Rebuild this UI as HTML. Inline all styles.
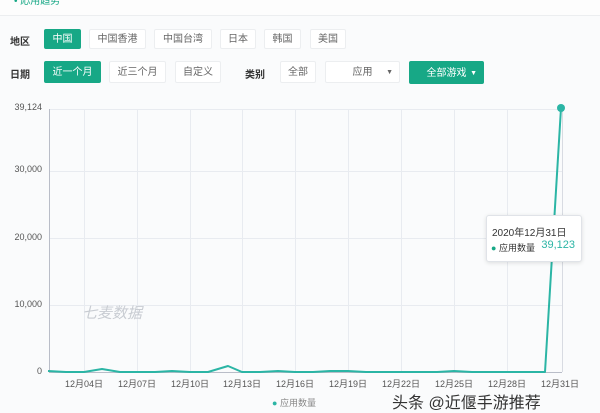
<!DOCTYPE html><html><head><meta charset="utf-8"><style>
body{margin:0;width:600px;height:400px;background:#fafbfc;font-family:"Liberation Sans","Noto Sans CJK SC",sans-serif;position:relative;overflow:hidden;color:#333}
.b{position:absolute;height:20px;line-height:20px;font-size:10px;text-align:center;border:1px solid #eceef0;background:#fff;color:#666;border-radius:2px;box-sizing:border-box}
.g{background:#17a886;color:#fff;border-color:#17a886}
.l{position:absolute;font-size:10px;font-weight:bold;color:#333}
.yl{position:absolute;font-size:9px;color:#555;right:558px;text-align:right}
.xl{position:absolute;top:377px;font-size:9px;color:#555;width:60px;text-align:center;margin-left:-30px}
</style></head><body>
<div style="position:absolute;left:0;top:0;width:600px;height:15px;background:#fdfdfd;border-bottom:1px solid #eceef0"></div>
<div style="position:absolute;left:14px;top:-8px;font-size:10px;color:#17a886">• 応用趋势</div>
<div class="l" style="left:10px;top:33px">地区</div>
<div class="b g" style="left:44px;top:29px;width:37px">中国</div>
<div class="b" style="left:89px;top:29px;width:57px">中国香港</div>
<div class="b" style="left:154px;top:29px;width:58px">中国台湾</div>
<div class="b" style="left:220px;top:29px;width:36px">日本</div>
<div class="b" style="left:264px;top:29px;width:37px">韩国</div>
<div class="b" style="left:310px;top:29px;width:36px">美国</div>
<div class="l" style="left:10px;top:66px">日期</div>
<div class="b g" style="left:44px;top:61px;width:57px;height:22px;line-height:22px">近一个月</div>
<div class="b" style="left:109px;top:61px;width:57px;height:22px;line-height:22px">近三个月</div>
<div class="b" style="left:175px;top:61px;width:46px;height:22px;line-height:22px">自定义</div>
<div class="l" style="left:245px;top:66px">类别</div>
<div class="b" style="left:280px;top:61px;width:36px;height:22px;line-height:22px">全部</div>
<div class="b" style="left:325px;top:61px;width:75px;height:22px;line-height:22px">应用<span style="position:absolute;right:6px;font-size:7px">▼</span></div>
<div class="b g" style="left:409px;top:61px;width:75px;height:23px;line-height:23px">全部游戏<span style="position:absolute;right:6px;font-size:7px">▼</span></div>
<div class="yl" style="top:102px">39,124</div>
<div class="yl" style="top:164px">30,000</div>
<div class="yl" style="top:232px">20,000</div>
<div class="yl" style="top:299px">10,000</div>
<div class="yl" style="top:366px">0</div>
<svg style="position:absolute;left:0;top:0" width="600" height="400">
<g stroke="#e8ebf0" stroke-width="1">
<line x1="49" y1="109.5" x2="562" y2="109.5"/><line x1="49" y1="171.5" x2="562" y2="171.5"/><line x1="49" y1="238.5" x2="562" y2="238.5"/><line x1="49" y1="305.5" x2="562" y2="305.5"/>
<line x1="84.5" y1="109" x2="84.5" y2="372"/><line x1="137.5" y1="109" x2="137.5" y2="372"/><line x1="190.5" y1="109" x2="190.5" y2="372"/><line x1="242.5" y1="109" x2="242.5" y2="372"/><line x1="295.5" y1="109" x2="295.5" y2="372"/><line x1="348.5" y1="109" x2="348.5" y2="372"/><line x1="401.5" y1="109" x2="401.5" y2="372"/><line x1="454.5" y1="109" x2="454.5" y2="372"/><line x1="507.5" y1="109" x2="507.5" y2="372"/>
</g>
<line x1="562.5" y1="109" x2="562.5" y2="372" stroke="#d8dbe2"/>
<line x1="49.5" y1="109" x2="49.5" y2="373" stroke="#b9bdc8"/>
<line x1="49" y1="372.5" x2="562" y2="372.5" stroke="#b9bdc8"/>
<path d="M48 371 L66 372 L84 372 L102 369 L120 372 L137 372 L155 372 L172 371 L190 372 L208 372 L228 366 L242 372 L260 372 L278 371 L295 372 L313 372 L330 371 L348 371 L366 372 L384 372 L401 372 L419 372 L437 372 L454 371 L472 372 L490 372 L507 372 L525 372 L545 372 L561 108" fill="none" stroke="#2bb5a5" stroke-width="2" stroke-linejoin="round"/>
<circle cx="561" cy="108" r="4" fill="#2bb5a5"/>
</svg>
<div style="position:absolute;left:82px;top:302px;font-size:15px;color:#c8ccd2;font-style:italic">七麦数据</div>
<div style="position:absolute;left:486px;top:215px;width:94px;height:45px;background:#fff;border:1px solid #e0e3e8;border-radius:3px;box-shadow:0 1px 4px rgba(0,0,0,.12);font-size:10px;white-space:nowrap">
<div style="position:absolute;left:5px;top:8px;color:#333">2020年12月31日</div>
<div style="position:absolute;left:4px;top:25px;color:#333;font-size:9px"><span style="color:#17a886">●</span> 应用数量</div>
<div style="position:absolute;right:6px;top:23px;color:#2bb5a5;font-size:11px">39,123</div>
</div>
<div class="xl" style="left:84px">12月04日</div><div class="xl" style="left:137px">12月07日</div><div class="xl" style="left:190px">12月10日</div><div class="xl" style="left:242px">12月13日</div><div class="xl" style="left:295px">12月16日</div><div class="xl" style="left:348px">12月19日</div><div class="xl" style="left:401px">12月22日</div><div class="xl" style="left:454px">12月25日</div><div class="xl" style="left:507px">12月28日</div><div class="xl" style="left:560px">12月31日</div>
<div style="position:absolute;left:272px;top:396px;font-size:9px;color:#888"><span style="color:#2bb5a5">●</span> 应用数量</div>
<div style="position:absolute;left:392px;top:389px;font-size:16px;color:#333">头条 @近偃手游推荐</div>
</body></html>
